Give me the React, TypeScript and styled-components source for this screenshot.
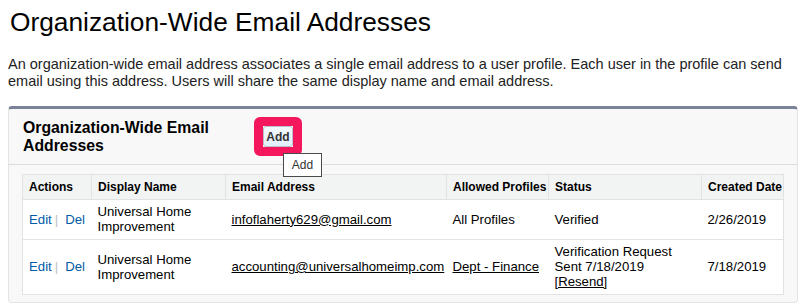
import React from 'react';
import styled, { createGlobalStyle } from 'styled-components';

const GlobalStyle = createGlobalStyle`
    html, body {
        margin: 0;
        padding: 0;
        background: #ffffff;
    }
    body {
        font-family: "Liberation Sans", Arial, sans-serif;
        color: #000000;
    }
`;

type Row = {
    name: string[];
    email: string;
    profiles: string;
    profilesLink?: boolean;
    status: string[];
    resend?: boolean;
    created: string;
};

const rows: Row[] = [
    {
        name: ['Universal Home', 'Improvement'],
        email: 'infoflaherty629@gmail.com',
        profiles: 'All Profiles',
        status: ['Verified'],
        created: '2/26/2019',
    },
    {
        name: ['Universal Home', 'Improvement'],
        email: 'accounting@universalhomeimp.com',
        profiles: 'Dept - Finance',
        profilesLink: true,
        status: ['Verification Request', 'Sent 7/18/2019'],
        resend: true,
        created: '7/18/2019',
    },
];

const columns = [
    { label: 'Actions', width: 69 },
    { label: 'Display Name', width: 134 },
    { label: 'Email Address', width: 221 },
    { label: 'Allowed Profiles', width: 102 },
    { label: 'Status', width: 153 },
    { label: 'Created Date', width: 82 },
];

// Organization-wide email addresses setup page
const App = () => {
    return (
        <Page>
            <GlobalStyle />
            <Title>Organization-Wide Email Addresses</Title>
            <Intro>
                An organization-wide email address associates a single email address to a user profile. Each user in the
                profile can send email using this address. Users will share the same display name and email address.
            </Intro>
            <Block>
                <BlockHeader>
                    <BlockTitle>Organization-Wide Email Addresses</BlockTitle>
                    <Highlight>
                        <AddButton>Add</AddButton>
                        <Tooltip>Add</Tooltip>
                    </Highlight>
                </BlockHeader>
                <List>
                    <colgroup>
                        {columns.map((c) => (
                            <col key={c.label} style={{ width: c.width }} />
                        ))}
                    </colgroup>
                    <thead>
                        <tr>
                            {columns.map((c) => (
                                <HeadCell key={c.label}>{c.label}</HeadCell>
                            ))}
                        </tr>
                    </thead>
                    <tbody>
                        {rows.map((r) => (
                            <tr key={r.email}>
                                <Cell>
                                    <ActionLink>Edit</ActionLink>
                                    <Pipe>|</Pipe>
                                    <ActionLink>Del</ActionLink>
                                </Cell>
                                <Cell>
                                    {r.name[0]}
                                    <br />
                                    {r.name[1]}
                                </Cell>
                                <Cell>
                                    <DataLink $nowrap>{r.email}</DataLink>
                                </Cell>
                                <Cell>{r.profilesLink ? <DataLink>{r.profiles}</DataLink> : r.profiles}</Cell>
                                <Cell>
                                    {r.status.map((s, i) => (
                                        <React.Fragment key={s}>
                                            {i > 0 && <br />}
                                            {s}
                                        </React.Fragment>
                                    ))}
                                    {r.resend && (
                                        <>
                                            <br />
                                            <DataLink>[Resend]</DataLink>
                                        </>
                                    )}
                                </Cell>
                                <Cell>{r.created}</Cell>
                            </tr>
                        ))}
                    </tbody>
                </List>
            </Block>
        </Page>
    );
};

const Page = styled.div`
    padding: 8px 5px 8px 8px;
`;

const Title = styled.h1`
    margin: 0 0 19px 2px;
    font-size: 26.3px;
    font-weight: normal;
    line-height: 29px;
    color: #000000;
`;

const Intro = styled.p`
    max-width: 782px;
    margin: 0 0 16px 0;
    font-size: 14.5px;
    line-height: 17px;
    color: #222222;
`;

const Block = styled.div`
    background: #f8f8f8;
    border: 1px solid #e4e4e4;
    border-top: 3px solid #7a8299;
    border-radius: 4px;
    padding: 0 14px 7px 13px;
`;

const BlockHeader = styled.div`
    display: flex;
    align-items: flex-start;
    padding: 8px 0 8px 14px;
    margin: 0 -14px 0 -13px;
    border-bottom: 1px solid #dcdcdc;
`;

const BlockTitle = styled.h2`
    width: 231px;
    margin: 2px 0 0 0;
    font-size: 15.8px;
    line-height: 18px;
    font-weight: bold;
    color: #000000;
`;

const Highlight = styled.span`
    position: relative;
    display: inline-flex;
    border: 9px solid #f5175d;
    border-radius: 6px;
`;

const AddButton = styled.button`
    width: 30px;
    height: 21px;
    padding: 0;
    font-family: "Liberation Sans", Arial, sans-serif;
    font-size: 12px;
    font-weight: bold;
    color: #333333;
    background: linear-gradient(#f3f9fe, #e2f0fb);
    border: 1px solid #b8c0c8;
    border-radius: 3px;
`;

const Tooltip = styled.span`
    position: absolute;
    left: 20px;
    top: 27px;
    width: 39px;
    height: 24px;
    box-sizing: border-box;
    display: flex;
    align-items: center;
    justify-content: center;
    background: #ffffff;
    border: 1px solid #4a4a4a;
    font-size: 12px;
    color: #333333;
`;

const List = styled.table`
    width: 761px;
    margin-top: 9px;
    table-layout: fixed;
    border-collapse: collapse;
    background: #ffffff;
    border: 1px solid #e0e3e5;
`;

const HeadCell = styled.th`
    height: 24px;
    padding: 0 0 0 6px;
    text-align: left;
    font-size: 12px;
    font-weight: bold;
    color: #000000;
    background: #f2f3f3;
    border: 1px solid #e0e3e5;
    white-space: nowrap;
    overflow: hidden;
`;

const Cell = styled.td`
    padding: 4px 6px 5px;
    font-size: 13.2px;
    line-height: 15px;
    color: #000000;
    vertical-align: middle;
    border-bottom: 1px solid #e3e3e3;
`;

const ActionLink = styled.a`
    color: #015ba7;
    text-decoration: none;
`;

const Pipe = styled.span`
    color: #c0c0c0;
    margin: 0 7px 0 3px;
`;

const DataLink = styled.a<{ $nowrap?: boolean }>`
    color: #000000;
    text-decoration: underline;
    white-space: ${(p) => (p.$nowrap ? 'nowrap' : 'normal')};
`;

export default App;
